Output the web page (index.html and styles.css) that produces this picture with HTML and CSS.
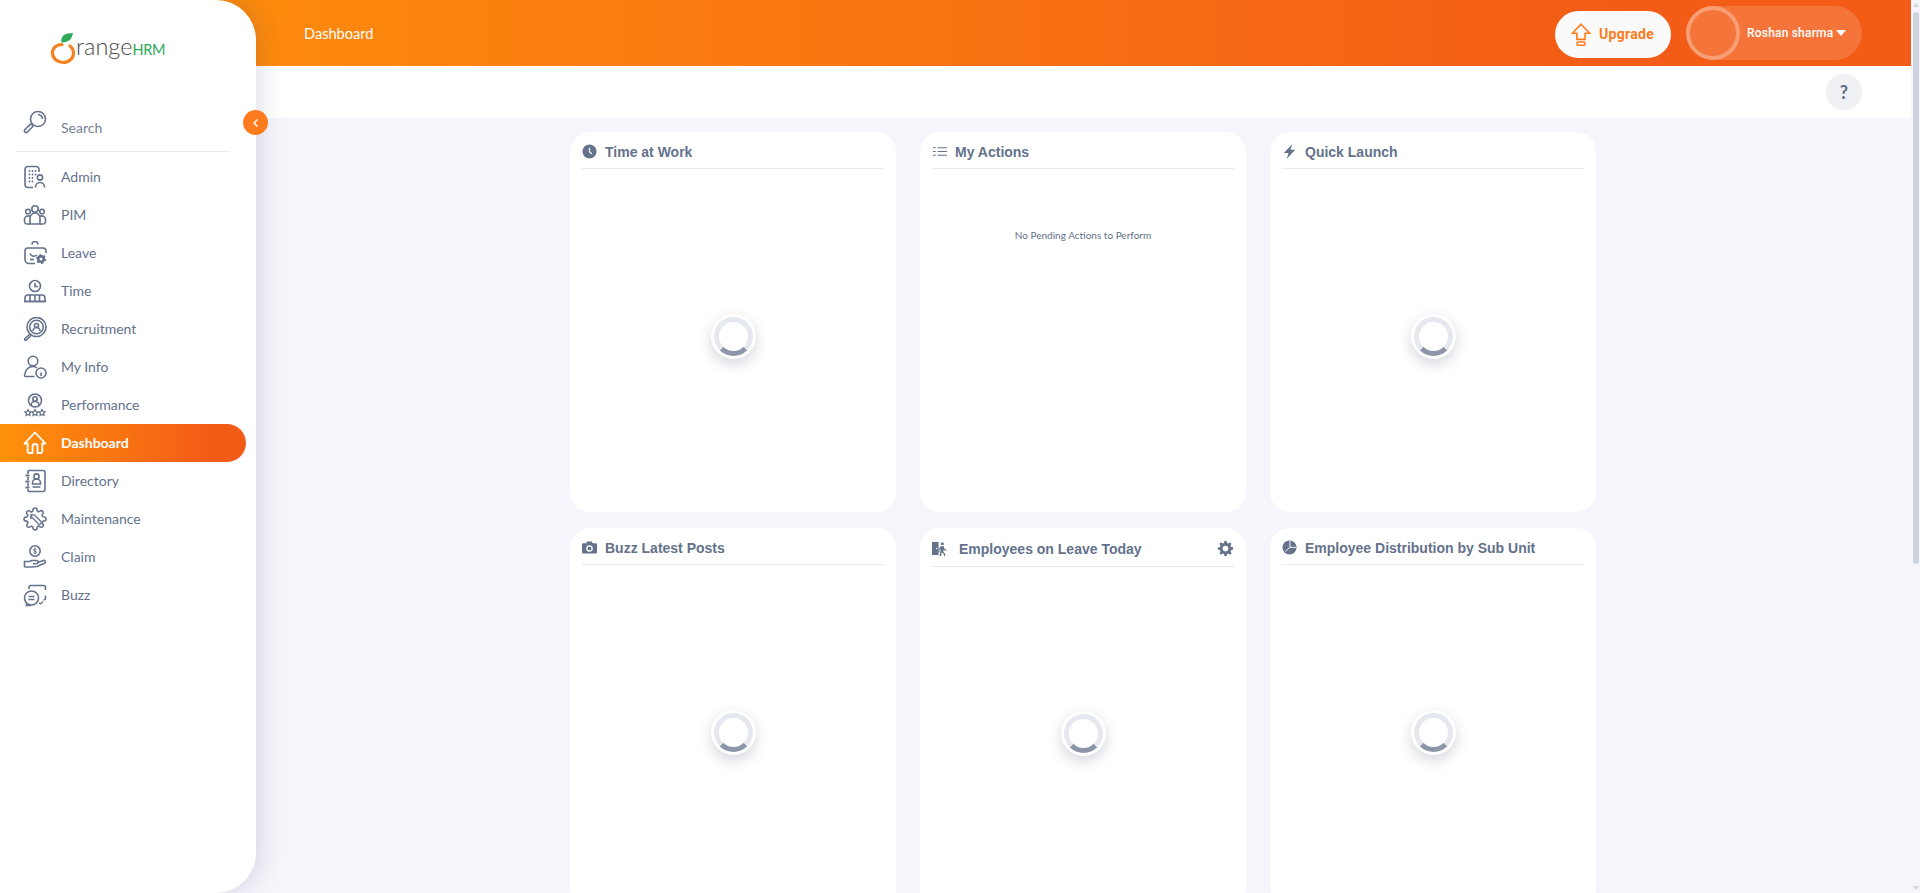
FILE: index.html
```html
<!DOCTYPE html>
<html lang="en">
<head>
<meta charset="UTF-8" />
<title>OrangeHRM Dashboard</title>
<link rel="stylesheet" href="styles.css">
</head>
<body>

<div class="app">

  <aside class="sidebar">
    <div class="logo">
      <svg class="logo-mark" viewBox="0 0 26 32" width="26" height="32">
        <path d="M11.500 9.500C10 3 15 0 23 0c-1 6-5 10-11.500 9.500z" fill="#2eaa58"/>
        <path d="M12 11.500C6 11.500 2 15.500 2.500 20.500 3 26 8 29.500 13 29.500c6 0 10.500-4 10.500-9.500 0-3-1.500-5.500-3.500-7" fill="none" stroke="#f58220" stroke-width="3.200" stroke-linecap="round"/>
      </svg>
      <span class="logo-range">range</span><span class="logo-hrm">HRM</span>
    </div>

    <div class="search">
      <svg class="icon" viewBox="0 0 24 24"><circle cx="15" cy="9" r="7.500"/><path d="M15 4.500A4.500 4.500 0 0 1 19.500 9"/><path d="M9.500 14.500 7.500 14.200 2 19.500a1.500 1.500 0 0 0 2.500 2.500l5.300-5.500z"/></svg>
      <span>Search</span>
    </div>

    <button class="collapse" aria-label="Collapse menu">
      <svg viewBox="0 0 10 10" width="10" height="10"><path d="M6.500 1.500 3 5l3.500 3.500" fill="none" stroke="#fff" stroke-width="1.400"/></svg>
    </button>

    <ul class="menu">
      <li class="menu-item">
        <svg class="icon" viewBox="0 0 24 24"><path d="M10 22.500H5a3 3 0 0 1-3-3V4.500a3 3 0 0 1 3-3h8a3 3 0 0 1 3 3V7"/><path d="M6.500 6h0M9.500 6h0M12.500 6h0M6.500 9.500h0M9.500 9.500h0M12.500 9.500h0M6.500 13h0M9.500 13h0M6.500 16.500h0M9.500 16.500h0" stroke-width="1.800" stroke-linecap="round"/><circle cx="17" cy="12.500" r="2.600"/><path d="M12.500 22.500v-.5a4.500 4.500 0 0 1 9 0v.5"/></svg>
        <span>Admin</span>
      </li>
      <li class="menu-item">
        <svg class="icon" viewBox="0 0 24 24"><circle cx="12" cy="6" r="3.200"/><circle cx="5" cy="8.500" r="2.300"/><circle cx="19" cy="8.500" r="2.300"/><path d="M7 21v-6a5 5 0 0 1 10 0v6z"/><path d="M7 21H4a2.500 2.500 0 0 1-2.500-2.500V16A3.500 3.500 0 0 1 7 13.500M17 21h3a2.500 2.500 0 0 0 2.500-2.500V16A3.500 3.500 0 0 0 17 13.500"/></svg>
        <span>PIM</span>
      </li>
      <li class="menu-item">
        <svg class="icon" viewBox="0 0 24 24"><path d="M12 22.500H6a4 4 0 0 1-4-4V10a3 3 0 0 1 3-3h15a3 3 0 0 1 3 3v2"/><path d="M9 3.500a3 3 0 0 1 6 0"/><path d="M7 12.500c1.500 3 4.500 3.500 7 1.500"/><path d="M7 18.500h4"/><circle cx="18" cy="18" r="2.800" stroke-width="2.600"/><circle cx="18" cy="18" r="4.300" stroke-width="1.400" stroke-dasharray="2 2.500"/></svg>
        <span>Leave</span>
      </li>
      <li class="menu-item">
        <svg class="icon" viewBox="0 0 24 24"><circle cx="12" cy="7" r="5.500"/><path d="M12 4v3.500h3"/><path d="M2 22.500V19a3 3 0 0 1 3-3h14a3 3 0 0 1 3 3v3.500z"/><path d="M7 16v6.500M12 16v6.500M16.500 16v6.500M1 22.500h22"/></svg>
        <span>Time</span>
      </li>
      <li class="menu-item">
        <svg class="icon" viewBox="0 0 24 24"><circle cx="13.500" cy="10" r="9.500"/><circle cx="13.500" cy="10" r="6.800"/><circle cx="13.500" cy="8.500" r="2"/><path d="M10 14a3.500 3.500 0 0 1 7 0"/><path d="M7 17 2 21.500a1 1 0 0 0 1.500 1.500L8.500 18"/></svg>
        <span>Recruitment</span>
      </li>
      <li class="menu-item">
        <svg class="icon" viewBox="0 0 24 24"><circle cx="10" cy="6" r="4.800"/><path d="M11.500 21.500H2.500A1 1 0 0 1 1.500 20.500C2.500 14 6 11.500 10 11.500c1.500 0 3 .5 4 1.500"/><circle cx="18" cy="18" r="5"/><path d="M18 17.500v3.500M18 15.200h0"/></svg>
        <span>My Info</span>
      </li>
      <li class="menu-item">
        <svg class="icon" viewBox="0 0 24 24"><circle cx="12" cy="7.500" r="6.500"/><circle cx="12" cy="6" r="2.200"/><path d="M8 12.500a4 4 0 0 1 8 0"/><path d="M5 16.500l1 2 2.200.3-1.600 1.500.4 2.200L5 21.500l-2 1 .4-2.200-1.600-1.500 2.200-.3zM12 16.500l1 2 2.200.3-1.600 1.500.4 2.200-2-1-2 1 .4-2.200-1.600-1.500 2.200-.3zM19 16.500l1 2 2.200.3-1.600 1.500.4 2.200-2-1-2 1 .4-2.200-1.600-1.500 2.200-.3z" stroke-width="1.200"/></svg>
        <span>Performance</span>
      </li>
      <li class="menu-item active">
        <svg class="icon" viewBox="0 0 24 24"><path d="M1.500 12.500 12 1.500l10.500 11h-3.200v8a1.500 1.500 0 0 1-1.500 1.500h-3.300v-6.500a2.500 2.500 0 0 0-5 0V22H6.200a1.500 1.500 0 0 1-1.500-1.500v-8z" stroke-linejoin="round"/></svg>
        <span>Dashboard</span>
      </li>
      <li class="menu-item">
        <svg class="icon" viewBox="0 0 24 24"><path d="M5 1.500h15a2 2 0 0 1 2 2v17a2 2 0 0 1-2 2H5"/><path d="M5 1.500V5M5 8v3M5 14v3M5 20v2.500"/><path d="M2.500 6.500h4M2.500 12.500h4M2.500 18.500h4" stroke-width="2"/><circle cx="13.500" cy="7.500" r="2.600"/><path d="M9.500 14a4 4 0 0 1 8 0v1h-8zM9.500 18h8"/></svg>
        <span>Directory</span>
      </li>
      <li class="menu-item">
        <svg class="icon" viewBox="0 0 24 24"><path d="M19.400 15a1.650 1.650 0 0 0 .33 1.820l.06.06a2 2 0 0 1 0 2.830 2 2 0 0 1-2.830 0l-.06-.06a1.650 1.650 0 0 0-1.820-.33 1.650 1.650 0 0 0-1 1.510V21a2 2 0 0 1-2 2 2 2 0 0 1-2-2v-.09A1.650 1.650 0 0 0 9 19.400a1.650 1.650 0 0 0-1.820.33l-.06.06a2 2 0 0 1-2.830 0 2 2 0 0 1 0-2.830l.06-.06a1.650 1.650 0 0 0 .33-1.820 1.650 1.650 0 0 0-1.510-1H3a2 2 0 0 1-2-2 2 2 0 0 1 2-2h.09A1.650 1.650 0 0 0 4.600 9a1.650 1.650 0 0 0-.33-1.820l-.06-.06a2 2 0 0 1 0-2.830 2 2 0 0 1 2.830 0l.06.06a1.650 1.650 0 0 0 1.820.33H9a1.650 1.650 0 0 0 1-1.510V3a2 2 0 0 1 2-2 2 2 0 0 1 2 2v.09a1.650 1.650 0 0 0 1 1.510 1.650 1.650 0 0 0 1.820-.33l.06-.06a2 2 0 0 1 2.830 0 2 2 0 0 1 0 2.830l-.06.06a1.650 1.650 0 0 0-.33 1.820V9a1.650 1.650 0 0 0 1.510 1H21a2 2 0 0 1 2 2 2 2 0 0 1-2 2h-.09a1.650 1.650 0 0 0-1.510 1z"/><path d="M8 7.500l1 3 6.500 6.500a1.800 1.800 0 0 0 2.500-2.500L11.500 8z" stroke-width="1.300"/><path d="M8 12a4 4 0 0 1 0-3" /></svg>
        <span>Maintenance</span>
      </li>
      <li class="menu-item">
        <svg class="icon" viewBox="0 0 24 24"><circle cx="12" cy="6" r="5.200"/><path d="M13.500 4.500c-.5-1-3-1-3 .5s3 .8 3 2.300-2.500 1.500-3 .5M12 2.800v6.400" stroke-width="1"/><path d="M1.500 22v-5.500h5l2.500-1h4.500a1.500 1.500 0 0 1 0 3.200H10"/><path d="M14.500 17.500l6-2a1.500 1.500 0 0 1 1.500 2.500l-8 3.500-5.500.5H1.500"/></svg>
        <span>Claim</span>
      </li>
      <li class="menu-item">
        <svg class="icon" viewBox="0 0 24 24"><path d="M6 6V4.500a2 2 0 0 1 2-2h12.500a2 2 0 0 1 2 2V7M22.500 12.500V15a2 2 0 0 1-2 2"/><circle cx="8.500" cy="15" r="7"/><path d="M5.500 13.500h6M5.500 16.500h6"/><path d="M3.500 20v2.500H8"/><path d="M16 20l1.500 1 2.500-2.500" stroke-width="1.300"/></svg>
        <span>Buzz</span>
      </li>
    </ul>
  </aside>

  <header class="topbar">
    <span class="page-title">Dashboard</span>
    <div class="topbar-right">
      <button class="upgrade">
        <svg viewBox="0 0 24 28" width="20" height="23"><path d="M12 1.500 22.500 12.500H17V20H7v-7.500H1.500z" fill="none" stroke="#ff7b1d" stroke-width="2"/><rect x="7" y="23" width="10" height="4" rx="1.500" fill="none" stroke="#ff7b1d" stroke-width="1.800"/></svg>
        Upgrade
      </button>
      <div class="user">
        <span class="avatar"></span>
        <span class="user-name">Roshan sharma</span>
        <span class="caret"></span>
      </div>
    </div>
  </header>

  <div class="subbar">
    <button class="help">?</button>
  </div>

  <main class="content">
    <section class="widgets">

      <article class="card">
        <h3 class="card-head">
          <svg class="card-icon" viewBox="0 0 16 16"><circle cx="8" cy="8" r="7.500"/><path d="M8 4v4.500l2.500 2" fill="none" stroke="#fff" stroke-width="1.300"/></svg>
          Time at Work
        </h3>
        <div class="card-body"><span class="spinner"></span></div>
      </article>

      <article class="card">
        <h3 class="card-head">
          <svg class="card-icon" viewBox="0 0 16 16"><path d="M6 3.500h10v1H6zM6 7.500h10v1H6zM6 11.500h10v1H6zM1 3.500h3v1H1zM1 7.500h3v1H1zM1 11.500h3v1H1z"/></svg>
          My Actions
        </h3>
        <div class="card-body empty"><p>No Pending Actions to Perform</p></div>
      </article>

      <article class="card">
        <h3 class="card-head">
          <svg class="card-icon" viewBox="0 0 16 16"><path d="M11 0 2 9.500h5L5 16l9-10H9z"/></svg>
          Quick Launch
        </h3>
        <div class="card-body"><span class="spinner"></span></div>
      </article>

      <article class="card">
        <h3 class="card-head">
          <svg class="card-icon" viewBox="0 0 16 16"><path fill-rule="evenodd" d="M1.500 3.500H4.500L5.500 1.500h5l1 2h3a1.500 1.500 0 0 1 1.500 1.500v8a1.500 1.500 0 0 1-1.500 1.500h-13A1.500 1.500 0 0 1 0 13V5a1.500 1.500 0 0 1 1.500-1.500zM8 5.500a3.500 3.500 0 1 0 0 7 3.500 3.500 0 0 0 0-7z"/><circle cx="8" cy="9" r="2"/></svg>
          Buzz Latest Posts
        </h3>
        <div class="card-body"><span class="spinner"></span></div>
      </article>

      <article class="card">
        <h3 class="card-head has-action">
          <svg class="card-icon wide" viewBox="0 0 16 16"><path d="M0 1h7v14H0z"/><circle cx="11" cy="2.800" r="1.600"/><path d="M9.500 5.500h3l1 3 2.500 1-.5 1-3-1-.5 2 2 2v2.500h-1.300V14L10.500 12l-1 4H8l1.500-7.500L8 9.500V12H7V8.500z"/><circle cx="5" cy="8" r=".8" fill="#fff"/></svg>
          Employees on Leave Today
          <svg class="gear" viewBox="0 0 24 24"><path fill-rule="evenodd" d="M19.400 15a1.650 1.650 0 0 0 .33 1.820l.06.06a2 2 0 0 1 0 2.830 2 2 0 0 1-2.830 0l-.06-.06a1.650 1.650 0 0 0-1.820-.33 1.650 1.650 0 0 0-1 1.510V21a2 2 0 0 1-2 2 2 2 0 0 1-2-2v-.09A1.650 1.650 0 0 0 9 19.400a1.650 1.650 0 0 0-1.820.33l-.06.06a2 2 0 0 1-2.830 0 2 2 0 0 1 0-2.830l.06-.06a1.650 1.650 0 0 0 .33-1.820 1.650 1.650 0 0 0-1.510-1H3a2 2 0 0 1-2-2 2 2 0 0 1 2-2h.09A1.650 1.650 0 0 0 4.600 9a1.650 1.650 0 0 0-.33-1.820l-.06-.06a2 2 0 0 1 0-2.830 2 2 0 0 1 2.830 0l.06.06a1.650 1.650 0 0 0 1.820.33H9a1.650 1.650 0 0 0 1-1.510V3a2 2 0 0 1 2-2 2 2 0 0 1 2 2v.09a1.650 1.650 0 0 0 1 1.510 1.650 1.650 0 0 0 1.820-.33l.06-.06a2 2 0 0 1 2.830 0 2 2 0 0 1 0 2.830l-.06.06a1.650 1.650 0 0 0-.33 1.820V9a1.650 1.650 0 0 0 1.510 1H21a2 2 0 0 1 2 2 2 2 0 0 1-2 2h-.09a1.650 1.650 0 0 0-1.510 1zM12 8a4 4 0 1 0 0 8 4 4 0 0 0 0-8z"/></svg>
        </h3>
        <div class="card-body"><span class="spinner"></span></div>
      </article>

      <article class="card">
        <h3 class="card-head">
          <svg class="card-icon" viewBox="0 0 16 16"><circle cx="8" cy="8" r="7.500"/><path d="M8.500 1v6.800l-5 4.500M8.500 7.800H15" fill="none" stroke="#fff" stroke-width="1"/></svg>
          Employee Distribution by Sub Unit
        </h3>
        <div class="card-body"><span class="spinner"></span></div>
      </article>

    </section>
  </main>

  <div class="scrollbar">
    <span class="scroll-up"></span>
    <span class="scroll-thumb"></span>
    <span class="scroll-down"></span>
  </div>

</div>

</body>
</html>
```

FILE: styles.css
```css
:root {
  --orange-start: #ff920b;
  --orange-end: #f35c17;
  --orange: #ff7b1d;
  --slate: #64728c;
  --page-bg: #f5f5fb;
  --line: #e8eaef;
  --scroll: #cfd3df;
}

* {
  box-sizing: border-box;
}

body {
  margin: 0;
  background-color: var(--page-bg);
  color: var(--slate);
  font-family: Lato, "Open Sans", sans-serif;
  font-size: 14px;
}

button {
  border: none;
  font-family: inherit;
  cursor: pointer;
}

.app {
  display: grid;
  grid-template-columns: 256px 1fr 9px;
  grid-template-rows: 66px 52px 1fr;
  height: 100vh;
  overflow: hidden;
}

/* sidebar sits on top of the header, so the round corner shows the gradient */
.sidebar {
  grid-column: 1;
  grid-row: 1 / -1;
  position: relative;
  z-index: 10;
  background-color: #fff;
  border-radius: 0 40px 40px 0;
  box-shadow: 4px 0 24px rgba(50, 60, 110, 0.16);
}

.logo {
  display: flex;
  align-items: baseline;
  height: 66px;
  padding: 33px 0 0 50px;
  color: #4a4a4a;
}

.logo-mark {
  align-self: flex-start;
}

.logo-range {
  font-size: 23.500px;
  line-height: 26px;
  font-weight: 300;
}

.logo-hrm {
  color: #2eaa58;
  font-size: 14.500px;
  letter-spacing: -0.3px;
}

.icon {
  flex: none;
  width: 24px;
  height: 24px;
  fill: none;
  stroke: var(--slate);
  stroke-width: 1.6;
}

.search {
  display: flex;
  align-items: flex-end;
  gap: 14px;
  height: 86px;
  margin: 0 26px 0 16px;
  padding: 44px 0 15px 7px;
  border-bottom: 1px solid var(--line);
  line-height: 17px;
  color: #737f94;
}

.search .icon {
  margin-bottom: 2px;
}

.collapse {
  position: absolute;
  top: 110px;
  left: 243px;
  display: flex;
  align-items: center;
  justify-content: center;
  width: 25px;
  height: 25px;
  padding: 0;
  border-radius: 50%;
  background-color: var(--orange);
}

.menu {
  margin: 6px 0 0;
  padding: 0;
  list-style: none;
}

.menu-item {
  display: flex;
  align-items: center;
  gap: 14px;
  width: 246px;
  height: 38px;
  padding-left: 23px;
}

.menu-item span {
  margin-top: -2px;
}

.menu-item.active {
  background: linear-gradient(90deg, var(--orange-start), var(--orange-end) 85%);
  border-radius: 0 19px 19px 0;
  color: #fff;
  font-weight: 700;
}

.menu-item.active .icon {
  stroke: #fff;
  stroke-width: 1.8;
}

.topbar {
  grid-column: 1 / 3;
  grid-row: 1;
  display: flex;
  align-items: center;
  justify-content: space-between;
  padding: 0 49px 0 304px;
  background: linear-gradient(90deg, var(--orange-start), var(--orange-end) 85%);
  color: #fff;
}

.page-title {
  font-size: 14.600px;
}

.topbar-right {
  display: flex;
  align-items: center;
  gap: 15px;
}

.upgrade {
  display: flex;
  align-items: center;
  gap: 8px;
  width: 116px;
  height: 47px;
  margin-top: 2px;
  padding: 0 0 0 16px;
  border-radius: 24px;
  background-color: #fafafa;
  color: var(--orange);
  font-family: Roboto, sans-serif;
  font-size: 14px;
  font-weight: 700;
  letter-spacing: 0.3px;
}

.user {
  display: flex;
  align-items: center;
  width: 176px;
  height: 54px;
  border-radius: 27px;
  background-color: rgba(255, 255, 255, 0.15);
  font-family: Roboto, sans-serif;
  font-size: 12px;
  font-weight: 500;
}

.avatar {
  flex: none;
  width: 54px;
  height: 54px;
  margin-right: 7px;
  border: 4px solid rgba(255, 255, 255, 0.3);
  border-radius: 50%;
}

.user-name {
  letter-spacing: 0.2px;
}

.caret {
  margin-left: 3px;
  border-left: 5px solid transparent;
  border-right: 5px solid transparent;
  border-top: 6px solid #fff;
}

.subbar {
  grid-column: 2;
  grid-row: 2;
  display: flex;
  align-items: center;
  justify-content: flex-end;
  padding-right: 49px;
  background-color: #fff;
}

.help {
  width: 36px;
  height: 36px;
  padding: 0;
  border-radius: 50%;
  background-color: #f0f1f4;
  color: #5b6c8c;
  font-size: 18px;
  font-weight: 700;
}

.content {
  grid-column: 2;
  grid-row: 3;
  min-height: 0;
  padding: 14px 1px 0 0;
}

.widgets {
  display: grid;
  grid-template-columns: repeat(3, 326px);
  grid-auto-rows: 380px;
  gap: 16px 24px;
  justify-content: center;
}

.card {
  display: flex;
  flex-direction: column;
  padding: 0 12px;
  background-color: #fff;
  border-radius: 20px;
}

.card-head {
  display: flex;
  align-items: center;
  gap: 8px;
  flex: none;
  height: 37px;
  margin: 0;
  padding-top: 3px;
  border-bottom: 1px solid var(--line);
  color: var(--slate);
  font-family: "Liberation Sans", Arial, sans-serif;
  font-size: 14px;
  font-weight: 700;
}

.card-head.has-action {
  height: 39px;
}

.card-icon {
  flex: none;
  width: 15px;
  height: 15px;
  fill: var(--slate);
}

.card-icon.wide {
  margin-right: 4px;
}

.gear {
  width: 17px;
  height: 17px;
  margin-left: auto;
  fill: var(--slate);
}

.card-body {
  flex: 1;
  display: flex;
  align-items: center;
  justify-content: center;
  padding-bottom: 8px;
}

.card-body.empty {
  align-items: flex-start;
  padding-top: 60px;
}

.card-body p {
  margin: 0;
  font-size: 10px;
}

.spinner {
  display: flex;
  align-items: center;
  justify-content: center;
  width: 45px;
  height: 45px;
  background-color: #fff;
  border-radius: 50%;
  box-shadow: 0 5px 14px rgba(40, 50, 80, 0.2);
}

.spinner::before {
  content: '';
  width: 29px;
  height: 29px;
  border: 5px solid #e5e8ee;
  border-bottom-color: #8d96a9;
  border-radius: 50%;
}

/* page scrollbar, drawn because the capture hides the real one */
.scrollbar {
  grid-column: 3;
  grid-row: 1 / -1;
  display: flex;
  flex-direction: column;
  align-items: center;
  padding: 3px 0 3px;
  background-color: var(--page-bg);
}

.scroll-up,
.scroll-down {
  flex: none;
  border-left: 3px solid transparent;
  border-right: 3px solid transparent;
}

.scroll-up {
  border-bottom: 4px solid var(--scroll);
}

.scroll-down {
  border-top: 4px solid var(--scroll);
}

.scroll-thumb {
  flex: none;
  width: 6px;
  height: 552px;
  margin: 5px 0 auto;
  background-color: var(--scroll);
  border-radius: 3px;
}
```
